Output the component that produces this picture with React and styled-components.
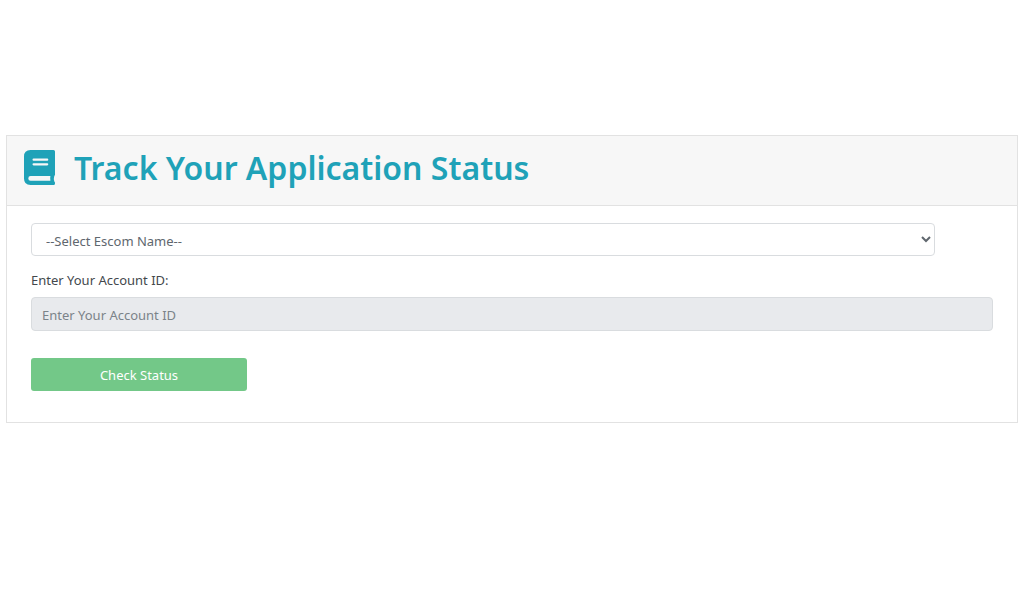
import styled, { createGlobalStyle } from "styled-components";

const GlobalStyle = createGlobalStyle`
    *, *::before, *::after {
        box-sizing: border-box;
    }
    body {
        margin: 0;
        background: #fff;
        color: #43484d;
        font-family: "Segoe UI", "Noto Sans", "Open Sans", sans-serif;
        font-size: 13px;
        line-height: 20px;
    }
`

const Page = styled.main`
    padding: 135px 6px 0;
`

const Card = styled.section`
    border: 1px solid #e2e2e2;
    background: #fff;
`

const CardHeader = styled.header`
    display: flex;
    align-items: center;
    gap: 19px;
    height: 70px;
    padding: 0 17px 6px;
    background: #f7f7f7;
    border-bottom: 1px solid #e2e2e2;
    color: #1fa2b8;
`

const BookIcon = styled.svg`
    flex: none;
    width: 31px;
    height: 35px;
    fill: currentColor;
`

const Title = styled.h1`
    margin: 0;
    font-size: 32px;
    font-weight: 600;
    line-height: 40px;
`

const Form = styled.form`
    display: flex;
    flex-direction: column;
    align-items: flex-start;
    padding: 17px 24px 31px;
`

const EscomSelect = styled.select`
    width: 94%;
    height: 33px;
    padding: 2px 4px 0 10px;
    border: 1px solid #d9dcdf;
    border-radius: 4px;
    background: #fff;
    color: #60676e;
    font: inherit;
`

const Label = styled.label`
    margin: 14px 0 7px;
`

const Input = styled.input`
    width: 100%;
    height: 34px;
    padding: 2px 10px 0;
    border: 1px solid #d9dcdf;
    border-radius: 4px;
    background: #e8eaed;
    font: inherit;
    &::placeholder {
        color: #7b8389;
        opacity: 1;
    }
`

const Button = styled.button`
    width: 216px;
    height: 33px;
    margin-top: 27px;
    border: none;
    border-radius: 3px;
    background: #73c888;
    color: #fff;
    font: inherit;
`

export default function App() {
    return (
        <>
            <GlobalStyle />
            <Page>
                <Card>
                    <CardHeader>
                        <BookIcon viewBox="0 0 31 35" aria-hidden="true">
                            <path
                                fillRule="evenodd"
                                d="M6.5 0H29.5Q31 0 31 1.5V24.5Q31 25.4 30.3 26Q29.4 28.5 30.3 31.5Q31 32 31 32.9V33.5Q31 35 29.5 35H6.5Q0 35 0 28.5V6.5Q0 0 6.5 0ZM9.6 8.6A1 1 0 0 0 9.6 10.8H23.2A1 1 0 0 0 23.2 8.6ZM9.6 13.2A1 1 0 0 0 9.6 15.4H23.2A1 1 0 0 0 23.2 13.2ZM6.6 26.1A2.3 2.3 0 0 0 6.6 30.7H26.4Q25.9 28.4 26.4 26.1Z"
                            />
                        </BookIcon>
                        <Title>Track Your Application Status</Title>
                    </CardHeader>
                    <Form>
                        <EscomSelect aria-label="Escom Name">
                            <option>--Select Escom Name--</option>
                        </EscomSelect>
                        <Label htmlFor="accountId">Enter Your Account ID:</Label>
                        <Input id="accountId" type="text" placeholder="Enter Your Account ID" disabled />
                        <Button type="submit" disabled>Check Status</Button>
                    </Form>
                </Card>
            </Page>
        </>
    )
}
